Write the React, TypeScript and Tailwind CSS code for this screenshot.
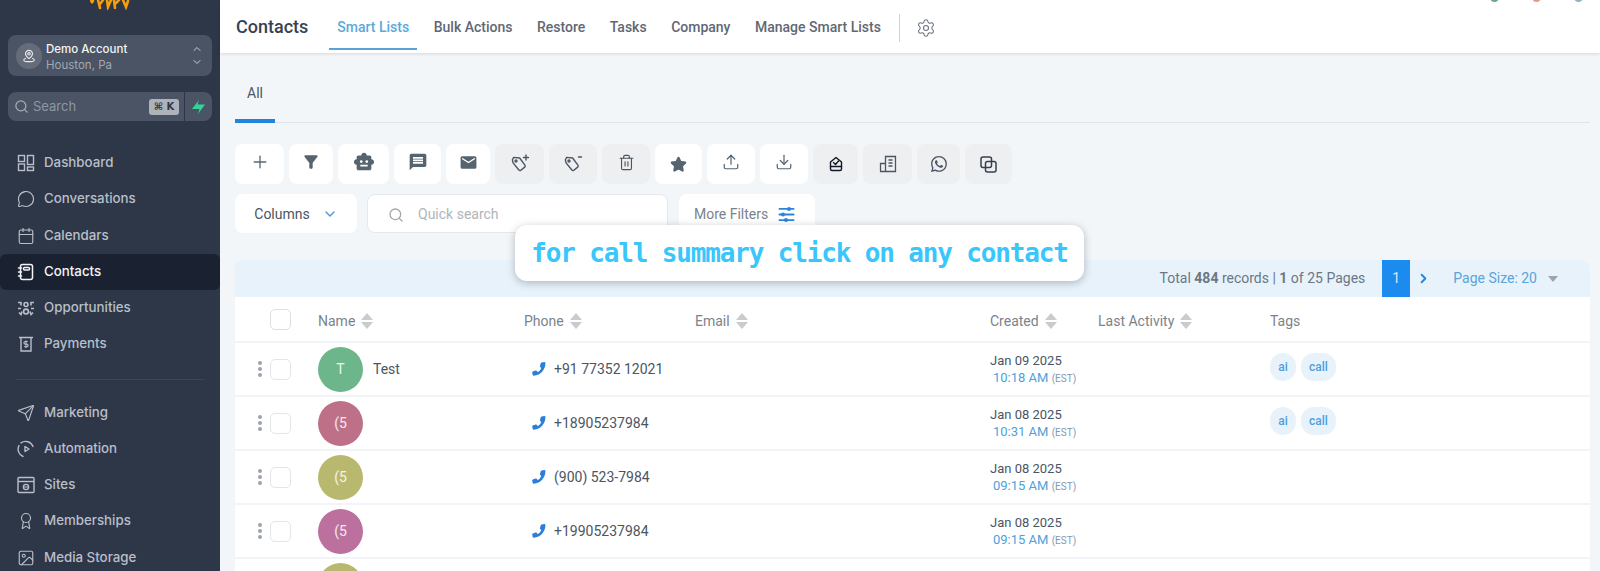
import React from "react";
import { MessageCircle, Calendar, Send, Award, Image, Search, ChevronUp, ChevronDown, Plus, Settings, Upload, Download, Star, Trash2, ChevronRight } from "lucide-react";
import { MdMessage, MdEmail, MdSmartToy, MdFilterAlt } from "react-icons/md";
import { BsWhatsapp } from "react-icons/bs";

const DashIcon = () => (
  <svg width="18" height="18" viewBox="0 0 18 18" fill="none" stroke="currentColor" strokeWidth="1.4">
    <rect x="1.5" y="1.5" width="6" height="6" />
    <rect x="1.5" y="10" width="6" height="6.5" />
    <rect x="10.5" y="1.5" width="6" height="9" />
    <rect x="10.5" y="13" width="6" height="3.5" />
  </svg>
);
const NotebookIcon = () => (
  <svg width="18" height="18" viewBox="0 0 18 18" fill="none" stroke="currentColor" strokeWidth="1.5" strokeLinecap="round">
    <rect x="3.5" y="1.5" width="12" height="15" rx="2" />
    <rect x="6.5" y="4.5" width="6" height="2.5" rx="1" />
    <path d="M1.5 5h3M1.5 9h3M1.5 13h3" />
  </svg>
);
const OppIcon = () => (
  <svg width="19" height="19" viewBox="0 0 18 18" fill="none" stroke="currentColor" strokeWidth="1.6">
    <circle cx="9" cy="5" r="2" />
    <circle cx="9" cy="12" r="2.4" />
    <path d="M1 3h3v3M1 9h3M2 13l2 2 1-3M17 3h-3v3M17 9h-3M16 13l-2 2-1-3" />
  </svg>
);
const PayIcon = () => (
  <svg width="18" height="18" viewBox="0 0 18 18" fill="none" stroke="currentColor" strokeWidth="1.4">
    <path d="M2 2.5h14M4 2.5v13.5h10V2.5" />
    <path d="M10.8 6.5H8.2a1.2 1.2 0 0 0 0 2.6h1.6a1.2 1.2 0 0 1 0 2.6H7M9 5.5v7.5" strokeWidth="1.1" />
  </svg>
);
const AutoIcon = () => (
  <svg width="18" height="18" viewBox="0 0 18 18" fill="none" stroke="currentColor" strokeWidth="1.4" strokeLinecap="round" strokeLinejoin="round">
    <path d="M16 6.5A8 8 0 0 0 4 2.8M2 5.5a8 8 0 0 0 4 11" />
    <path d="M8 6.5l4 2.5-4 2.5z" />
  </svg>
);
const SitesIcon = () => (
  <svg width="18" height="18" viewBox="0 0 18 18" fill="none" stroke="currentColor" strokeWidth="1.4">
    <rect x="1" y="1.5" width="16" height="15" rx="1" />
    <path d="M1 5.5h16" />
    <circle cx="9" cy="11" r="2.6" />
    <path d="M6.4 11h5.2" strokeWidth="1" />
  </svg>
);
const PinIcon = () => (
  <svg width="14" height="14" viewBox="0 0 16 16" fill="none" stroke="#e5e7eb" strokeWidth="1.3">
    <path d="M8 1.5a4 4 0 0 0-4 4c0 2.5 4 5.5 4 5.5s4-3 4-5.5a4 4 0 0 0-4-4z" />
    <circle cx="8" cy="5.5" r="1.4" />
    <path d="M4.5 10.5C2.8 11 2 11.7 2 12.5c0 1 2.6 2 6 2s6-1 6-2c0-.8-.8-1.5-2.5-2" />
  </svg>
);
const Bolt = () => (
  <svg width="13" height="14" viewBox="0 0 13 14" fill="#34d399">
    <path d="M7 0 5.5 4.5H13L6 14l1.5-5H0z" />
  </svg>
);
const TagPlus = ({ minus }: { minus?: boolean }) => (
  <svg width="20" height="20" viewBox="0 0 20 20" fill="none" stroke="#4b5563" strokeWidth="1.4" strokeLinejoin="round" strokeLinecap="round">
    <path d="M2 6.5 3 4h6l6 6.5a1.5 1.5 0 0 1 0 2L11.5 16a1.5 1.5 0 0 1-2 0L3 9.5z" transform="rotate(6 9 10)" />
    <circle cx="6" cy="7" r="1" />
    {minus ? <path d="M15.5 3h3" /> : <path d="M16 1v5M13.5 3.5h5" />}
  </svg>
);
const Bag = () => (
  <svg width="16" height="16" viewBox="0 0 16 16" fill="none" stroke="#111827" strokeWidth="1.4" strokeLinejoin="round" strokeLinecap="round">
    <path d="M2.5 6 8 1.5 13.5 6v7a1.5 1.5 0 0 1-1.5 1.5H4A1.5 1.5 0 0 1 2.5 13z" />
    <path d="M2.5 10.5h11M5.5 6.5l2 2 3-3.5" />
  </svg>
);
const Building = () => (
  <svg width="18" height="18" viewBox="0 0 18 18" fill="none" stroke="#4b5563" strokeWidth="1.3">
    <path d="M1.5 16.5V8.5h5v8M6.5 16.5V1.5h10v15zM1 16.5h16M9.5 5h4M9.5 8h4M9.5 11h4" />
  </svg>
);
const CopyIcon = () => (
  <svg width="17" height="17" viewBox="0 0 17 17" fill="none" stroke="#374151" strokeWidth="1.5">
    <rect x="1" y="1" width="10.5" height="10.5" rx="2" />
    <rect x="5.5" y="5.5" width="10.5" height="10.5" rx="2" />
  </svg>
);
const Phone = () => (
  <svg width="14" height="14" viewBox="0 0 14 14" fill="#2b7fd8">
    <path d="M9.6.6 12.4 0c.5 0 .9.3 1 .8.3 6.5-4.6 12.6-11.7 13-.5 0-.9-.3-1-.8L.2 10.6c0-.4.2-.8.6-1l2.8-1.1c.4-.1.8 0 1 .3l1 1.3c1.7-.8 3-2.3 3.7-4.2L8.2 4.9c-.3-.2-.4-.6-.2-1L8.8 1c.1-.2.5-.4.8-.4z" />
  </svg>
);
const Sort = () => (
  <svg width="12" height="16" viewBox="0 0 12 16" fill="#c9cbcf" className="ml-[6px]">
    <path d="M6 0l6 7H0zM0 9h12l-6 7z" />
  </svg>
);
const FilterLines = () => (
  <svg width="17" height="17" viewBox="0 0 17 17" fill="#2b84dc">
    <rect x="0.5" y="2" width="16" height="1.8" rx="0.9" />
    <rect x="0.5" y="7.6" width="16" height="1.8" rx="0.9" />
    <rect x="0.5" y="13.2" width="16" height="1.8" rx="0.9" />
    <circle cx="11" cy="2.9" r="2" />
    <circle cx="5" cy="8.5" r="2" />
    <circle cx="8" cy="14.1" r="2" />
  </svg>
);
const Squiggle = () => (
  <svg width="40" height="10" viewBox="0 0 40 10" fill="none" stroke="#f59e0b" strokeWidth="2.6" strokeLinecap="round">
    <path d="M1 0c1 3 1 3 2 1M8 0l2 8M10 4l3-4M17 0l1 7 3-7M24 0l1 8M25 4l4-4M33 0l3 7 2-6" />
  </svg>
);

const navA = [
  { label: "Dashboard", icon: <DashIcon /> },
  { label: "Conversations", icon: <MessageCircle size={18} strokeWidth={1.5} /> },
  { label: "Calendars", icon: <Calendar size={18} strokeWidth={1.5} /> },
  { label: "Contacts", icon: <NotebookIcon />, active: true },
  { label: "Opportunities", icon: <OppIcon /> },
  { label: "Payments", icon: <PayIcon /> },
];
const navB = [
  { label: "Marketing", icon: <Send size={18} strokeWidth={1.5} /> },
  { label: "Automation", icon: <AutoIcon /> },
  { label: "Sites", icon: <SitesIcon /> },
  { label: "Memberships", icon: <Award size={18} strokeWidth={1.5} /> },
  { label: "Media Storage", icon: <Image size={18} strokeWidth={1.5} /> },
];

const NavItem = ({ item }: { item: { label: string; icon: React.ReactNode; active?: boolean } }) => (
  <div className={`flex h-[36.25px] shrink-0 items-center gap-[9px] rounded-md pl-[17px] text-[13.3px] font-medium ${item.active ? "bg-[#1a2231] text-[#f3f4f6]" : "text-[#b9bfc9]"}`}>
    <span className="flex w-[18px] justify-center">{item.icon}</span>
    {item.label}
  </div>
);

const tools: { w: string; bg: string; up?: boolean; icon: React.ReactNode }[] = [
  { w: "w-[49px]", bg: "bg-white", up: true, icon: <Plus size={20} color="#5b6875" strokeWidth={1.6} /> },
  { w: "w-[44px]", bg: "bg-white", up: true, icon: <MdFilterAlt size={20} color="#56646f" /> },
  { w: "w-[51px]", bg: "bg-white", up: true, icon: <MdSmartToy size={22} color="#56646f" /> },
  { w: "w-[47px]", bg: "bg-white", up: true, icon: <MdMessage size={20} color="#56646f" /> },
  { w: "w-[44px]", bg: "bg-white", up: true, icon: <MdEmail size={19} color="#56646f" /> },
  { w: "w-[49px]", bg: "bg-[#eeeff0]", icon: <TagPlus /> },
  { w: "w-[48px]", bg: "bg-[#eeeff0]", icon: <TagPlus minus /> },
  { w: "w-[48px]", bg: "bg-[#eeeff0]", up: true, icon: <Trash2 size={17} color="#4b5563" strokeWidth={1.6} /> },
  { w: "w-[47px]", bg: "bg-white", icon: <Star size={17} color="#56646f" fill="#56646f" /> },
  { w: "w-[48px]", bg: "bg-white", up: true, icon: <Upload size={18} color="#56646f" strokeWidth={1.6} /> },
  { w: "w-[48px]", bg: "bg-white", up: true, icon: <Download size={18} color="#56646f" strokeWidth={1.6} /> },
  { w: "w-[45px]", bg: "bg-[#eeeff0]", icon: <Bag /> },
  { w: "w-[49px]", bg: "bg-[#eeeff0]", icon: <Building /> },
  { w: "w-[43px]", bg: "bg-[#eeeff0]", icon: <BsWhatsapp size={16} color="#4b5563" /> },
  { w: "w-[47px]", bg: "bg-[#eeeff0]", icon: <CopyIcon /> },
];

const rows = [
  { init: "T", name: "Test", color: "bg-[#6db58a]", phone: "+91 77352 12021", date: "Jan 09 2025", time: "10:18 AM", tags: true, offset: "ml-[3px]" },
  { init: "(5", name: "", color: "bg-[#bd7088]", phone: "+18905237984", date: "Jan 08 2025", time: "10:31 AM", tags: true, offset: "ml-[3px]" },
  { init: "(5", name: "", color: "bg-[#b8b86f]", phone: "(900) 523-7984", date: "Jan 08 2025", time: "09:15 AM", tags: false, offset: "ml-[3px]" },
  { init: "(5", name: "", color: "bg-[#bb709e]", phone: "+19905237984", date: "Jan 08 2025", time: "09:15 AM", tags: false, offset: "ml-[3px]" },
  { init: "", name: "", color: "bg-[#b8b86f]", phone: "", date: "", time: "", tags: false, offset: "ml-[3px]" },
];

const grid = "grid grid-cols-[83px_206px_171px_295px_108px_172px_1fr]";

export default function App() {
  return (
    <div className="flex h-[571px] w-[1600px] overflow-hidden bg-[#f2f6f9] font-['Roboto',sans-serif]">
      <aside className="flex h-full w-[220px] shrink-0 flex-col overflow-hidden bg-[#2d3748] font-['Inter',sans-serif]">
        <div className="flex h-[35px] shrink-0 justify-center">
          <Squiggle />
        </div>
        <div className="mx-[8px] flex h-[41px] shrink-0 items-center rounded-lg bg-[#4a5464] pl-[8px] pr-[9px]">
          <span className="flex h-[26px] w-[26px] items-center justify-center rounded-full bg-[#656c79]"><PinIcon /></span>
          <div className="ml-[4px] flex-1 pt-[2px] leading-[16px]">
            <div className="text-[11.5px] font-medium text-[#f3f4f6]">Demo Account</div>
            <div className="text-[11.5px] text-[#a2a8b3]">Houston, Pa</div>
          </div>
          <div className="flex flex-col gap-[1px] text-[#c9ced6]">
            <ChevronUp size={12} />
            <ChevronDown size={12} />
          </div>
        </div>
        <div className="mx-[8px] mt-[16px] flex h-[29px] shrink-0">
          <div className="flex flex-1 items-center rounded-l-lg bg-[#4a5464] pl-[6px] pr-[5px]">
            <Search size={15} color="#a7adb8" />
            <span className="ml-[4px] flex-1 text-[13px] text-[#8f96a3]">Search</span>
            <span className="flex h-[16px] w-[30px] items-center justify-center rounded-[3px] bg-[#aeb3bb] font-['DejaVu_Sans',sans-serif] text-[10px] font-bold text-[#2d3748]">⌘ K</span>
          </div>
          <div className="flex w-[28px] items-center justify-center rounded-r-lg border-l border-[#2d3748] bg-[#4a5464]"><Bolt /></div>
        </div>
        <nav className="mt-[24px] flex shrink-0 flex-col">
          {navA.map((n) => <NavItem key={n.label} item={n} />)}
          <div className="mx-[16px] mb-[15px] mt-[16px] h-px shrink-0 bg-[#3b4555]" />
          {navB.map((n) => <NavItem key={n.label} item={n} />)}
        </nav>
      </aside>

      <main className="relative flex min-w-0 flex-1 flex-col">
        <header className="relative z-10 flex h-[53px] shrink-0 items-center bg-white pl-[16px] shadow-[0_1px_3px_rgba(0,0,0,0.12)]">
          <h1 className="text-[18px] font-medium text-[#374151]">Contacts</h1>
          <div className="ml-[21px] flex h-[50px] items-center gap-[8.5px] self-start text-[14px] font-medium text-[#5f6874]">
            <span className="flex h-full items-center border-b-2 border-[#5aa3d8] px-[8px] pt-[7px] text-[#5aa9dc]">Smart Lists</span>
            <span className="px-[8px] pt-[5px]">Bulk Actions</span>
            <span className="px-[8px] pt-[5px]">Restore</span>
            <span className="px-[8px] pt-[5px]">Tasks</span>
            <span className="px-[8px] pt-[5px]">Company</span>
            <span className="px-[8px] pt-[5px]">Manage Smart Lists</span>
          </div>
          <div className="ml-[10px] mt-[3px] h-[28px] w-px bg-[#cfd3d8]" />
          <Settings size={20} color="#6b7280" strokeWidth={1.3} className="ml-[16px] mt-[3px]" />
          <span className="absolute right-[101px] top-[-7px] h-[9px] w-[9px] rounded-full bg-[#69a88c]" />
          <span className="absolute right-[59px] top-[-7px] h-[9px] w-[9px] rounded-full bg-[#e29a88]" />
          <span className="absolute right-[17px] top-[-7px] h-[9px] w-[9px] rounded-full bg-[#8fb4bf]" />
        </header>

        <div className="flex min-h-0 flex-1 flex-col pl-[15px] pr-[10px]">
          <div className="flex h-[70px] shrink-0 border-b border-[#dfe5ea]">
            <div className="flex h-[70px] w-[40px] items-center justify-center border-b-4 border-[#1f85dc] pt-[14px] text-[14px] text-[#4b5563]">All</div>
          </div>

          <div className="mt-[21px] flex h-[40px] shrink-0 gap-[5px]">
            {tools.map((t, i) => (
              <div key={i} className={`flex items-center justify-center rounded-lg ${t.w} ${t.bg} ${t.up ? "pb-[4px]" : ""}`}>{t.icon}</div>
            ))}
          </div>

          <div className="mt-[10px] flex h-[39px] shrink-0 text-[14px]">
            <div className="flex w-[122px] items-center justify-center gap-[12px] rounded-lg bg-white pt-[1px] text-[#4b5563]">
              Columns <ChevronDown size={16} color="#4c95d8" />
            </div>
            <div className="ml-[10px] flex w-[301px] items-center rounded-lg border border-[#e6e8eb] bg-white pl-[20px] pt-[2px] text-[#b0b5bb]">
              <Search size={16} color="#a3a8ae" />
              <span className="ml-[14px]">Quick search</span>
            </div>
            <div className="ml-[11px] flex w-[136px] items-center justify-start gap-[10px] rounded-lg bg-white pl-[15px] pt-[1px] text-[#7a838d]">
              More Filters <FilterLines />
            </div>
          </div>

          <div className="mt-[27px] flex h-[37px] shrink-0 items-center justify-end rounded-t-lg bg-[#e8f2fb] pr-[32px] text-[14px]">
            <span className="text-[#6b7785]">Total <b className="font-bold">484</b> records | <b className="font-bold">1</b> of 25 Pages</span>
            <span className="ml-[17px] flex h-full w-[28px] items-center justify-center bg-[#1c8bf0] text-white/80">1</span>
            <ChevronRight size={15} color="#2b84dc" strokeWidth={3} className="ml-[6px] mr-[-1px]" />
            <span className="ml-[23px] text-[#5aa3dc]">Page Size: 20</span>
            <span className="ml-[11px] h-0 w-0 border-x-[5px] border-t-[6px] border-x-transparent border-t-[#9aa5b1]" />
          </div>

          <div className="min-h-0 flex-1 bg-white text-[14px]">
            <div className={`${grid} h-[46px] items-center border-b-2 border-[#f2f5f8] pt-[4px] text-[#7b838c]`}>
              <div className="pb-[4px] pl-[35px]"><span className="block h-[21px] w-[21px] rounded-[5px] border border-[#dcdfe3]" /></div>
              <div className="flex items-center">Name <Sort /></div>
              <div className="flex items-center">Phone <Sort /></div>
              <div className="flex items-center">Email <Sort /></div>
              <div className="flex items-center">Created <Sort /></div>
              <div className="flex items-center">Last Activity <Sort /></div>
              <div>Tags</div>
            </div>
            {rows.map((r, i) => (
              <div key={i} className={`${grid} h-[54px] items-center border-b-2 border-[#f2f5f8]`}>
                <div className="flex items-center pl-[23px]">
                  <span className="flex flex-col gap-[2px]">
                    <i className="h-[4px] w-[4px] rounded-full bg-[#9ca3af]" />
                    <i className="h-[4px] w-[4px] rounded-full bg-[#9ca3af]" />
                    <i className="h-[4px] w-[4px] rounded-full bg-[#9ca3af]" />
                  </span>
                  <span className="ml-[8px] block h-[21px] w-[21px] rounded-[5px] border border-[#e3e5e8]" />
                </div>
                <div className="flex items-center">
                  <span className={`flex h-[45px] w-[45px] items-center justify-center rounded-full text-[14px] text-white/85 ${r.color}`}>{r.init}</span>
                  <span className="ml-[10px] text-[#4b5563]">{r.name}</span>
                </div>
                <div className="flex items-center pl-[8px] text-[#4b5563]">
                  {r.phone && <Phone />}
                  <span className="ml-[8px]">{r.phone}</span>
                </div>
                <div />
                <div className="whitespace-nowrap text-[13px] leading-[17px] text-[#4b5563]">
                  <div>{r.date}</div>
                  {r.time && <div className={`${r.offset} text-[#4f9fdc]`}>{r.time} <span className="text-[10px] text-[#7f9ab3]">(EST)</span></div>}
                </div>
                <div />
                <div className="flex gap-[5px] pb-[4px]">
                  {r.tags && (
                    <>
                      <span className="flex h-[28px] w-[26px] items-center justify-center rounded-[13px] bg-[#e8f2fb] text-[12px] font-medium text-[#4f9fdc]">ai</span>
                      <span className="flex h-[28px] w-[35px] items-center justify-center rounded-[13px] bg-[#e8f2fb] text-[12px] font-medium text-[#4f9fdc]">call</span>
                    </>
                  )}
                </div>
              </div>
            ))}
          </div>
        </div>

        <div className="absolute left-[295px] top-[225px] z-20 flex h-[56px] w-[569px] items-center justify-center whitespace-nowrap rounded-xl bg-white pt-[1px] font-['DejaVu_Sans_Mono',monospace] text-[26px] font-bold tracking-[-1.15px] text-[#38c6fb] shadow-[0_2px_8px_rgba(0,0,0,0.25)]">
          for call summary click on any contact
        </div>
      </main>
    </div>
  );
}
